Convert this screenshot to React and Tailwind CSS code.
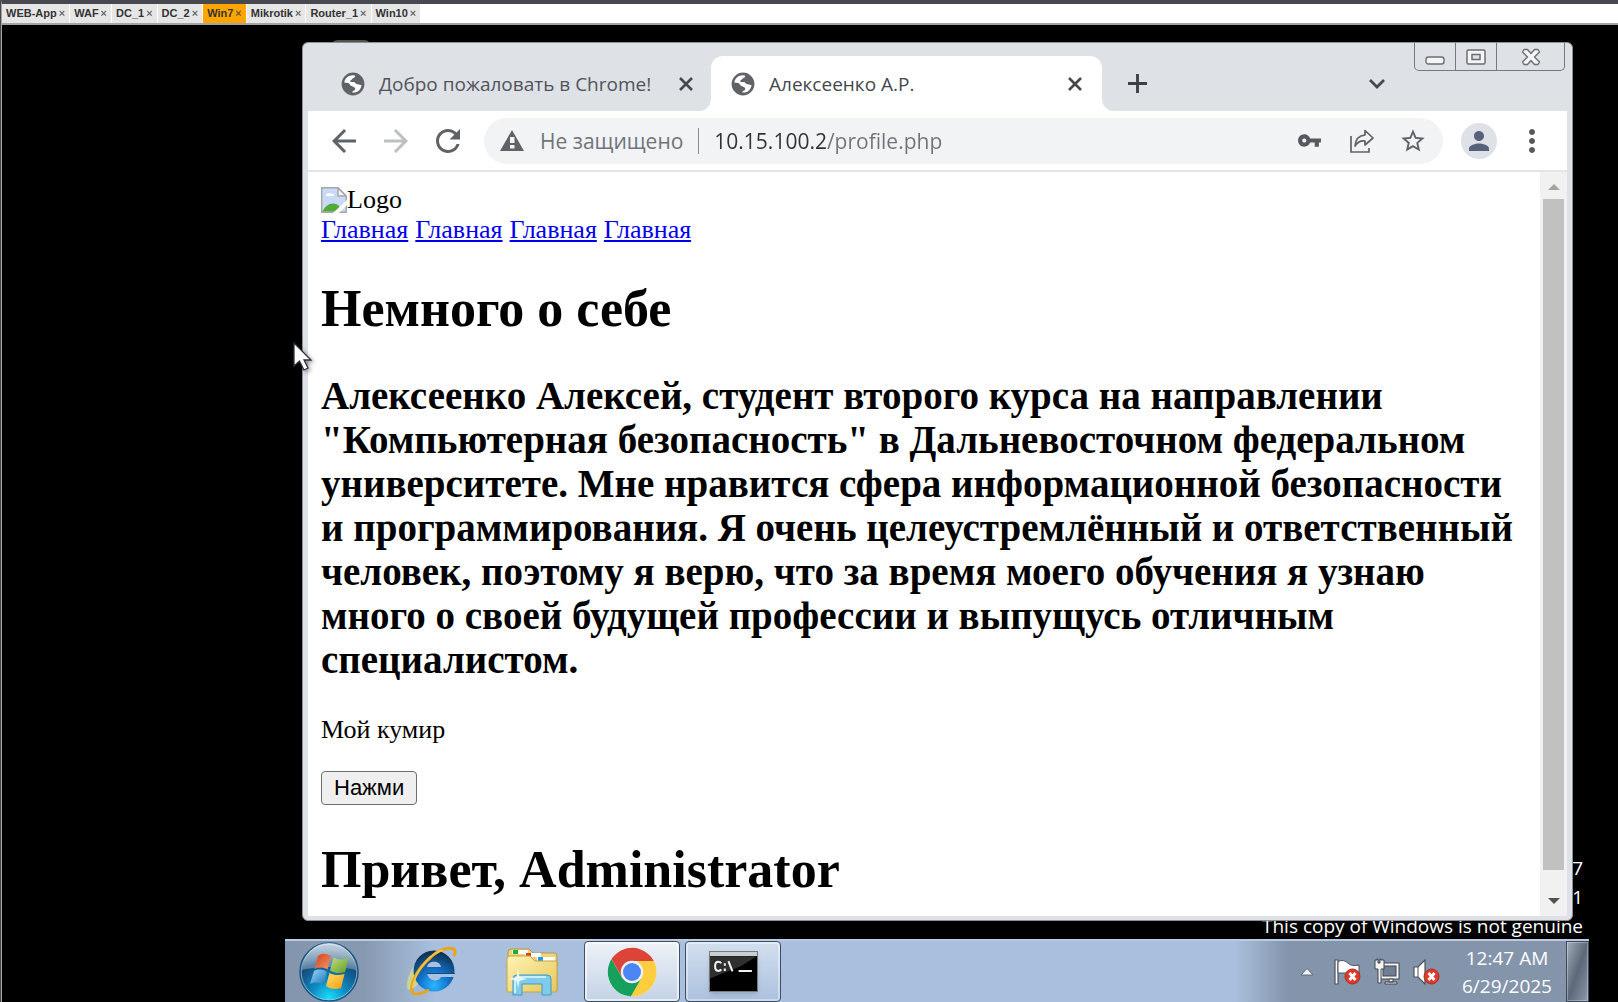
import React from "react";

const machines = ["WEB-App", "WAF", "DC_1", "DC_2", "Win7", "Mikrotik", "Router_1", "Win10"];

const ui = "font-['Open_Sans','Noto_Sans',sans-serif]";

function Globe() {
  return (
    <svg viewBox="0 0 24 24" className="size-6 shrink-0">
      <circle cx="12" cy="12" r="11.4" fill="#5f6368" />
      <path d="M3.200 10.500C4 6 7.600 3.200 11.600 3.200L14 3.600C14.600 5 13.600 6 12 6.200C11 6.600 11 7.600 10 8C8.800 8.600 9 10 10.400 10L13 10C14.400 10.200 14.400 11.600 15.600 12C17 12.400 18.600 12.400 20.600 13.400C19.800 17 17.400 19.800 14 20.600L11.400 20.600C11 19.400 12 18.800 13.200 18.400C14.400 17.800 14.600 16.400 13.600 15.400C12.400 14.600 11 14.200 9.600 13.400C8.400 12.600 8.800 11.400 7.400 11Z" fill="#fff" />
    </svg>
  );
}

function CloseMark() {
  return (
    <svg viewBox="0 0 14 14" className="size-[14px]" stroke="#45484c" strokeWidth="2.6">
      <path d="M1 1L13 13M13 1L1 13" />
    </svg>
  );
}

function Flare({ side }) {
  return (
    <svg viewBox="0 0 12 12" className={side === "left" ? "absolute bottom-0 -left-3 size-3" : "absolute bottom-0 -right-3 size-3"} fill="#fff">
      <path d={side === "left" ? "M12 0V12H0A12 12 0 0 0 12 0Z" : "M0 0V12H12A12 12 0 0 1 0 0Z"} />
    </svg>
  );
}

function Material({ d, className, fill = "#5f6368" }) {
  return (
    <svg viewBox="0 0 24 24" className={className} fill={fill}>
      <path d={d} />
    </svg>
  );
}

function TabStrip() {
  return (
    <header className="flex h-[68px] items-end">
      <div className="flex h-[55px] w-[403px] items-center pr-[18px] pl-[33px]">
        <Globe />
        <span className={`ml-[14px] flex-1 whitespace-nowrap text-[19px] leading-6 text-[#50545a] ${ui}`}>Добро пожаловать в Chrome!</span>
        <button aria-label="Close tab"><CloseMark /></button>
      </div>
      <div className="relative flex h-[55px] w-[391px] items-center rounded-t-xl bg-white pr-5 pl-5">
        <Flare side="left" />
        <Globe />
        <span className={`ml-[14px] flex-1 whitespace-nowrap text-[19px] leading-6 text-[#45484c] ${ui}`}>Алексеенко А.Р.</span>
        <button aria-label="Close tab"><CloseMark /></button>
        <Flare side="right" />
      </div>
      <button aria-label="New tab" className="mb-[18px] ml-[26px]">
        <svg viewBox="0 0 20 20" className="size-[19px]" stroke="#3c4043" strokeWidth="3"><path d="M10 0V20M0 10H20" /></svg>
      </button>
      <button aria-label="Search tabs" className="mb-[18px] ml-auto mr-[28px]">
        <svg viewBox="0 0 18 18" className="size-[18px]" fill="none" stroke="#45484c" strokeWidth="2.8"><path d="M2 5L9 12L16 5" /></svg>
      </button>
      <div className="mr-[2px] flex h-7 w-[151px] self-start rounded-b-[5px] border border-t-0 border-[#77797d] bg-[#dee1e6]">
        <button aria-label="Minimize" className="flex w-[41px] items-center justify-center border-r border-[#77797d]">
          <svg viewBox="0 0 20 16" className="mt-2 h-4 w-5"><rect x="1" y="4" width="18" height="7" rx="2.5" fill="#f4f5f6" stroke="#6c6e72" strokeWidth="1.4" /></svg>
        </button>
        <button aria-label="Maximize" className="flex w-[41px] items-center justify-center border-r border-[#77797d]">
          <svg viewBox="0 0 20 16" className="h-4 w-5" fill="#f4f5f6" stroke="#6c6e72" strokeWidth="1.5"><rect x="1" y="1" width="18" height="14" rx="1.5" /><rect x="6" y="5.5" width="8" height="5" fill="#dee1e6" /></svg>
        </button>
        <button aria-label="Close" className="flex flex-1 items-center justify-center">
          <svg viewBox="0 0 20 18" className="h-[18px] w-5" fill="#f4f5f6" stroke="#6c6e72" strokeWidth="1.4"><path d="M3 1.5H6.5L10 5.5L13.500 1.5H17L18.500 4L13.500 9L18.500 14L17 16.500H13.500L10 12.500L6.500 16.500H3L1.500 14L6.500 9L1.500 4Z" strokeLinejoin="round" /></svg>
        </button>
      </div>
    </header>
  );
}

function Toolbar() {
  return (
    <div className="flex h-[61px] items-center border-b-2 border-[#e4e5e7] bg-white">
      <button aria-label="Back" className="ml-[18px]"><Material className="size-9" d="M20 11H7.83l5.590-5.590L12 4l-8 8 8 8 1.410-1.410L7.830 13H20v-2z" /></button>
      <button aria-label="Forward" className="ml-4"><Material className="size-9" fill="#bdbfc2" d="M12 4l-1.410 1.410L16.170 11H4v2h12.170l-5.580 5.590L12 20l8-8z" /></button>
      <button aria-label="Reload" className="ml-4"><Material className="size-9" d="M17.650 6.350C16.200 4.900 14.210 4 12 4c-4.420 0-7.990 3.580-7.990 8s3.570 8 7.990 8c3.730 0 6.840-2.550 7.730-6h-2.080c-.82 2.330-3.040 4-5.650 4-3.310 0-6-2.690-6-6s2.690-6 6-6c1.660 0 3.140.69 4.220 1.780L13 11h7V4l-2.350 2.350z" /></button>
      <div className="ml-[18px] flex h-[46px] flex-1 items-center rounded-full bg-[#f1f3f4] pr-4 pl-4">
        <svg viewBox="0 0 24 21" className="h-[21px] w-6"><path d="M12 0L24 21H0Z" fill="#5f6368" /><rect x="10" y="7" width="4.500" height="6" fill="#f1f3f4" /><rect x="10" y="15" width="4.500" height="3.500" fill="#f1f3f4" /></svg>
        <label htmlFor="address" className={`ml-4 whitespace-nowrap text-[21px] leading-7 text-[#70747a] ${ui}`}>Не защищено</label>
        <span className="mx-[15px] h-[26px] w-px bg-[#8a8d91]" />
        <input
          id="address"
          defaultValue="10.15.100.2/profile.php"
          className={`h-8 min-w-0 flex-1 bg-[linear-gradient(90deg,#303236_113px,#70747a_113px)] bg-clip-text text-[21px] leading-7 text-transparent outline-none ${ui}`}
        />
        <button aria-label="Passwords"><Material className="size-[25px]" fill="#55595e" d="M12.650 10C11.830 7.670 9.610 6 7 6c-3.310 0-6 2.690-6 6s2.690 6 6 6c2.610 0 4.830-1.670 5.650-4H17v4h4v-4h2v-4H12.650zM7 14c-1.100 0-2-.9-2-2s.9-2 2-2 2 .9 2 2-.9 2-2 2z" /></button>
        <button aria-label="Share" className="ml-[27px]">
          <svg viewBox="0 0 26 26" className="size-[26px]" fill="none" stroke="#5f6368" strokeWidth="1.700"><path d="M2 8V24H20V20" /><path d="M16 2.500L24 10L16 17V13C12 12.500 8.500 14 6 18C6.500 11.500 10 7.500 16 7Z" strokeLinejoin="round" /></svg>
        </button>
        <button aria-label="Bookmark" className="ml-6"><Material className="size-7" d="M22 9.240l-7.190-.62L12 2 9.190 8.630 2 9.240l5.460 4.730L5.820 21 12 17.270 18.180 21l-1.630-7.030L22 9.240zM12 15.400l-3.760 2.270 1-4.280-3.320-2.880 4.380-.38L12 6.100l1.710 4.040 4.380.38-3.320 2.880 1 4.280L12 15.400z" /></button>
      </div>
      <button aria-label="Profile" className="ml-[18px] flex size-9 items-center justify-center rounded-full bg-[#dee1e6]"><Material className="size-[30px]" fill="#56627a" d="M12 12c2.210 0 4-1.790 4-4s-1.790-4-4-4-4 1.790-4 4 1.790 4 4 4zm0 2c-2.670 0-8 1.340-8 4v2h16v-2c0-2.660-5.330-4-8-4z" /></button>
      <button aria-label="Menu" className="mr-[17px] ml-[17px]"><Material className="size-9" fill="#55595e" d="M12 8c1.100 0 2-.9 2-2s-.9-2-2-2-2 .9-2 2 .9 2 2 2zm0 2c-1.100 0-2 .9-2 2s.9 2 2 2 2-.9 2-2-.9-2-2-2zm0 6c-1.100 0-2 .9-2 2s.9 2 2 2 2-.9 2-2-.9-2-2-2z" /></button>
    </div>
  );
}

function Page() {
  return (
    <div className="flex flex-1 bg-white">
      <main className="flex-1 px-[13px] pt-[13px] font-['Liberation_Serif',serif] text-[26px] leading-[30px] text-black">
        <div className="flex items-center">
          <svg viewBox="0 0 26 26" className="size-[26px]">
            <path d="M.7 .7H17L25.300 9V25.300H.7Z" fill="#c8daf7" stroke="#a3a6aa" strokeWidth="1.400" />
            <path d="M5 9C5 6 9 5 10 7C13 6 14 9 12 9Z" fill="#fff" />
            <path d="M1.400 24.600C5 17 12 14 18 19L20 24.600Z" fill="#54a938" />
            <path d="M17 1V9H25Z" fill="#f4f4f4" stroke="#a3a6aa" strokeWidth="1.400" />
            <path d="M12 26L26 13V18L18 26Z" fill="#fff" />
          </svg>
          <span>Logo</span>
        </div>
        <nav className="flex gap-[7px] text-[#0000ee]">
          {[0, 1, 2, 3].map((i) => (
            <a key={i} href="#" className="underline">Главная</a>
          ))}
        </nav>
        <h1 className="mt-[34px] text-[52px] leading-[60px] font-bold">Немного о себе</h1>
        <h2 className="mt-[35px] text-[39px] leading-[44px] font-bold">
          Алексеенко Алексей, студент второго курса на направлении "Компьютерная безопасность" в Дальневосточном
          федеральном университете. Мне нравится сфера информационной безопасности и программирования. Я очень
          целеустремлённый и ответственный человек, поэтому я верю, что за время моего обучения я узнаю много о своей
          будущей профессии и выпущусь отличным специалистом.
        </h2>
        <p className="mt-[33px]">Мой кумир</p>
        <button className="mt-[26px] block h-[34px] rounded-[4px] border border-[#6f6f6f] bg-[#efefef] px-3 font-['Liberation_Sans',sans-serif] text-[22px] leading-8">Нажми</button>
        <h1 className="mt-[35px] text-[52px] leading-[60px] font-bold">Привет, Administrator</h1>
      </main>
      <div className="flex w-[27px] flex-col items-center bg-[#f1f1f1] pt-3 pb-3">
        <svg viewBox="0 0 12 6" className="h-[6px] w-3 shrink-0"><path d="M0 6L6 0L12 6Z" fill="#a3a3a3" /></svg>
        <div className="mt-[9px] mb-[28px] w-[21px] flex-1 bg-[#c1c1c1]" />
        <svg viewBox="0 0 12 6" className="h-[6px] w-3 shrink-0"><path d="M0 0H12L6 6Z" fill="#505050" /></svg>
      </div>
    </div>
  );
}

function StartOrb() {
  return (
    <svg viewBox="0 0 60 60" className="size-[60px]">
      <defs>
        <radialGradient id="orb" cx=".5" cy=".95" r=".85"><stop offset="0" stopColor="#19e0ff" /><stop offset=".35" stopColor="#0e8cc4" /><stop offset=".75" stopColor="#154c7c" /><stop offset="1" stopColor="#3b6d95" /></radialGradient>
        <linearGradient id="orbShine" x1="0" y1="0" x2="0" y2="1"><stop offset="0" stopColor="#fff" stopOpacity=".7" /><stop offset="1" stopColor="#fff" stopOpacity=".25" /></linearGradient>
        <linearGradient id="red" x1="0" y1="0" x2="1" y2="1"><stop offset="0" stopColor="#d63c16" /><stop offset="1" stopColor="#f39a6c" /></linearGradient>
        <linearGradient id="green" x1="0" y1="0" x2="1" y2="1"><stop offset="0" stopColor="#c3dc84" /><stop offset="1" stopColor="#5fa021" /></linearGradient>
        <linearGradient id="blue" x1="0" y1="0" x2="1" y2="1"><stop offset="0" stopColor="#9ad7f7" /><stop offset="1" stopColor="#1474bd" /></linearGradient>
        <linearGradient id="yellow" x1="0" y1="0" x2="1" y2="1"><stop offset="0" stopColor="#ffdf70" /><stop offset="1" stopColor="#f79d0a" /></linearGradient>
      </defs>
      <circle cx="30" cy="30" r="29" fill="url(#orb)" stroke="#1e5480" strokeWidth="1.500" />
      <circle cx="30" cy="30" r="27.800" fill="none" stroke="#a5cbe2" strokeOpacity=".7" />
      <path d="M3 28A27 27 0 0 1 57 28C42 24 18 24 3 28Z" fill="url(#orbShine)" />
      <path d="M19 14C24 10 28 12 32 14L28.500 27.500C24 25 20 25 15.500 27Z" fill="url(#red)" />
      <path d="M34.500 15.500C39 18 44 18 49.500 16L46 30C40 32 35 31 31 28.500Z" fill="url(#green)" />
      <path d="M15 29C19 27 24 27 28 30L24.500 43C20 40 16 40 11 42Z" fill="url(#blue)" />
      <path d="M30.500 31C35 33.500 40 33.500 45.500 32L42 46C36 48 31 47 27 44Z" fill="url(#yellow)" />
    </svg>
  );
}

function ExplorerE() {
  return (
    <svg viewBox="0 0 54 54" className="size-[54px]">
      <defs><radialGradient id="ie" cx=".5" cy=".85" r=".85"><stop offset="0" stopColor="#2bb7ff" /><stop offset=".4" stopColor="#1375cf" /><stop offset="1" stopColor="#102b49" /></radialGradient></defs>
      <path d="M10 19C4 28 1 38 2 43C4 48 10 42 14 38Z" fill="#d6dd83" opacity=".8" />
      <circle cx="29" cy="26" r="20.500" fill="url(#ie)" />
      <path d="M22 22C23 15 35 15 36 22Z" fill="#a9c1de" />
      <path d="M22 28.500H50V32H36C34 37 24 37 22 28.500Z" fill="#a9c1de" />
      <path d="M22 28.500H50" stroke="#0c4c88" strokeWidth="1" />
      <path d="M49 11C55 0 38 1 26 12C12 24 3 42 8 48C11 51 18 48 24 45" fill="none" stroke="#e9a51a" strokeWidth="3" />
      <path d="M38 5C28 7 10 24 7.500 43" fill="none" stroke="#f8c84c" strokeWidth="1.500" />
    </svg>
  );
}

function Folder() {
  return (
    <svg viewBox="0 0 54 50" className="h-[50px] w-[54px]">
      <defs><linearGradient id="folder" x1="0" y1="0" x2="1" y2="1"><stop offset="0" stopColor="#fff3b4" /><stop offset="1" stopColor="#e5c75a" /></linearGradient></defs>
      <path d="M3 5Q3 2 6 2H24L28 6H49Q52 6 52 9V43H3Z" fill="#ecd47a" stroke="#b99a3f" />
      <rect x="7" y="3" width="16" height="4" fill="#fff" /><rect x="8" y="3" width="5" height="4" fill="#16b52a" />
      <rect x="20" y="6" width="16" height="4" fill="#fff" /><rect x="21" y="6" width="5" height="4" fill="#d5402b" />
      <rect x="32" y="10" width="18" height="4" fill="#fff" /><rect x="33" y="10" width="5" height="4" fill="#1e9ae8" />
      <path d="M2 12Q2 9 5 9H25L30 14H52V43Q52 45 50 45H3Q2 45 2 43Z" fill="url(#folder)" stroke="#c5a644" />
      <path d="M8 48V32Q8 28 12 28H42Q46 28 46 32V48H37V37H17V48Z" fill="#7ecbed" stroke="#4499c4" />
      <path d="M10 46V32Q11 30 14 30H41" fill="none" stroke="#c6efff" strokeWidth="2" />
      <path d="M13 22L14.500 30L22 32L14.500 34L13 41L11.500 34L4 32L11.500 30Z" fill="#fff" opacity=".8" />
    </svg>
  );
}

function ChromeLogo() {
  return (
    <svg viewBox="0 0 50 50" className="size-[50px]">
      <circle cx="25" cy="25" r="24.500" fill="#fff" />
      <path d="M4.500 12A24.500 24.500 0 0 0 24 49.500L35 31L25 25L15 30.500Z" fill="#16a05d" />
      <path d="M46.800 13.800A24.500 24.500 0 0 1 24 49.500L34.700 30.600L30 13.800Z" fill="#ffcd40" />
      <path d="M4.500 12L14.600 29.500L25 14H46.800A24.500 24.500 0 0 0 4.500 12Z" fill="#dc4437" />
      <circle cx="25" cy="25" r="11.200" fill="#f1f1f1" />
      <circle cx="25" cy="25" r="9" fill="#4a86f4" />
    </svg>
  );
}

function Console() {
  return (
    <span className="flex h-[41px] w-[49px] flex-col border border-[#77797c] bg-black shadow-md">
      <span className="h-1 bg-[#c9ced3]" />
      <svg viewBox="0 0 46 34" className="flex-1" fill="none" stroke="#f2f2f2" strokeWidth="2">
        <path d="M0 0H46L30 10Q10 18 0 22Z" fill="#444" stroke="none" opacity=".7" />
        <path d="M11 7Q10 5.500 8 5.500Q5 5.500 5 10Q5 14.500 8 14.500Q10 14.500 11 13M14.500 7V9.500M14.500 12V14.500M18 5L22 15M28 14.500H41" />
      </svg>
    </span>
  );
}

function ErrorBadge() {
  return (
    <g>
      <circle cx="19.500" cy="18.500" r="7.500" fill="#dc3a2b" stroke="#b62a1e" />
      <path d="M16.500 15L22.500 22M22.500 15L16.500 22" stroke="#fff" strokeWidth="2.800" />
    </g>
  );
}

function Taskbar() {
  return (
    <footer className="relative mr-[29px] ml-[283px] flex h-[63px] items-center border-t-2 border-[#b9cbe3] bg-[linear-gradient(90deg,#8496ad_0px,#8799b1_80px,#a8c0dd_150px,#a8c0dd_calc(100%-355px),#8394ab_calc(100%-300px))]">
      <button aria-label="Start" className="ml-[14px]"><StartOrb /></button>
      <button aria-label="Internet Explorer" className="ml-[46px]"><ExplorerE /></button>
      <button aria-label="Windows Explorer" className="ml-[46px]"><Folder /></button>
      <button aria-label="Google Chrome" className="ml-[25px] flex h-full w-[96px] items-center justify-center rounded-[4px] border border-[#3f4e64] bg-gradient-to-b from-[#eef2f8] to-[#c3d2e6] ring-2 ring-white/60 ring-inset"><ChromeLogo /></button>
      <button aria-label="Command Prompt" className="ml-[5px] flex h-full w-[96px] items-center justify-center rounded-[4px] border border-[#3f4e64] bg-gradient-to-b from-[#d3dfee] to-[#aac1de] ring-2 ring-white/40 ring-inset"><Console /></button>
      <div className="ml-auto flex items-center">
        <button aria-label="Show hidden icons"><svg viewBox="0 0 14 8" className="h-2 w-[14px]"><path d="M7 .5L13 7H1Z" fill="#f3f3f3" stroke="#5e6c80" /></svg></button>
        <svg viewBox="0 0 28 28" className="ml-[19px] size-7">
          <path d="M2 2H5V26H2Z" fill="#fff" stroke="#4c535e" strokeWidth="1.200" />
          <path d="M5 4C9 1 12 3 15 5C18 8 21 8 26 7V15H5Z" fill="#fff" stroke="#4c535e" />
          <ErrorBadge />
        </svg>
        <svg viewBox="0 0 28 28" className="ml-3 size-7" stroke="#3e454f">
          <rect x="7" y="5" width="19" height="16" fill="#f5f5f5" /><rect x="10" y="8" width="13" height="10" fill="#6e7f93" />
          <path d="M12 24H24V26H12ZM16 21H20V24H16Z" fill="#f5f5f5" />
          <path d="M2 2H4V1H5V5H7V1H8V2H11V11H8V25H5V11H2Z" fill="#f5f5f5" />
        </svg>
        <svg viewBox="0 0 28 28" className="ml-[11px] size-7">
          <path d="M2 9H6L13 2V26L6 19H2Z" fill="#fff" stroke="#4c535e" strokeWidth="1.200" />
          <path d="M6 9V19" stroke="#4c535e" />
          <ErrorBadge />
        </svg>
        <div className={`ml-3 w-[110px] text-center text-[19px] leading-[28px] text-white ${ui}`}>
          <p>12:47 AM</p>
          <p>6/29/2025</p>
        </div>
      </div>
      <button aria-label="Show desktop" className="ml-1 h-full w-[23px] border border-[#3e4a5b] bg-gradient-to-br from-[#a3aebb] via-[#5d6878] to-[#8a99ad] ring-1 ring-white/30 ring-inset" />
    </footer>
  );
}

export default function App() {
  return (
    <div className="flex min-h-screen flex-col border-l border-[#484850] bg-black">
      <div className="flex h-[25px] gap-px border-t-4 border-b-2 border-t-[#484850] border-b-[#a3a3a3] border-l border-l-[#a3a3a3] bg-white font-['Liberation_Sans',sans-serif] text-[11px] font-bold">
        {machines.map((name) => (
          <button key={name} className={name === "Win7" ? "flex items-center gap-[2px] bg-[#ffa500] px-1 text-[#333]" : "flex items-center gap-[2px] bg-[#e6e6e6] px-1 text-[#333]"}>
            <span>{name}</span>
            <span className="opacity-70">×</span>
          </button>
        ))}
      </div>
      <div className="relative flex flex-1 flex-col border-l border-[#a3a3a3]">
        <div className="absolute top-[15px] left-[328px] h-2 w-[42px] rounded-t-full bg-[#55524d]" />
        <div className={`absolute right-[35px] bottom-[61px] text-right text-[19px] leading-[29px] text-white ${ui}`}>
          <p>7</p>
          <p>1</p>
          <p>This copy of Windows is not genuine</p>
        </div>
        <section className="relative mt-[17px] mr-[45px] mb-[18px] ml-[300px] flex flex-1 flex-col rounded-[6px] border border-[#8d9094] bg-[#dee1e6] px-[5px] pb-1">
          <TabStrip />
          <Toolbar />
          <Page />
        </section>
        <Taskbar />
        <svg viewBox="0 0 20 30" className="absolute top-[317px] left-[291px] h-[30px] w-5 drop-shadow-[2px_2px_2px_rgba(0,0,0,0.4)]">
          <path d="M1 1V24L6.500 19L11 28L15 26L11 18H18Z" fill="#fff" stroke="#2d3040" strokeWidth="1.300" />
        </svg>
      </div>
    </div>
  );
}
